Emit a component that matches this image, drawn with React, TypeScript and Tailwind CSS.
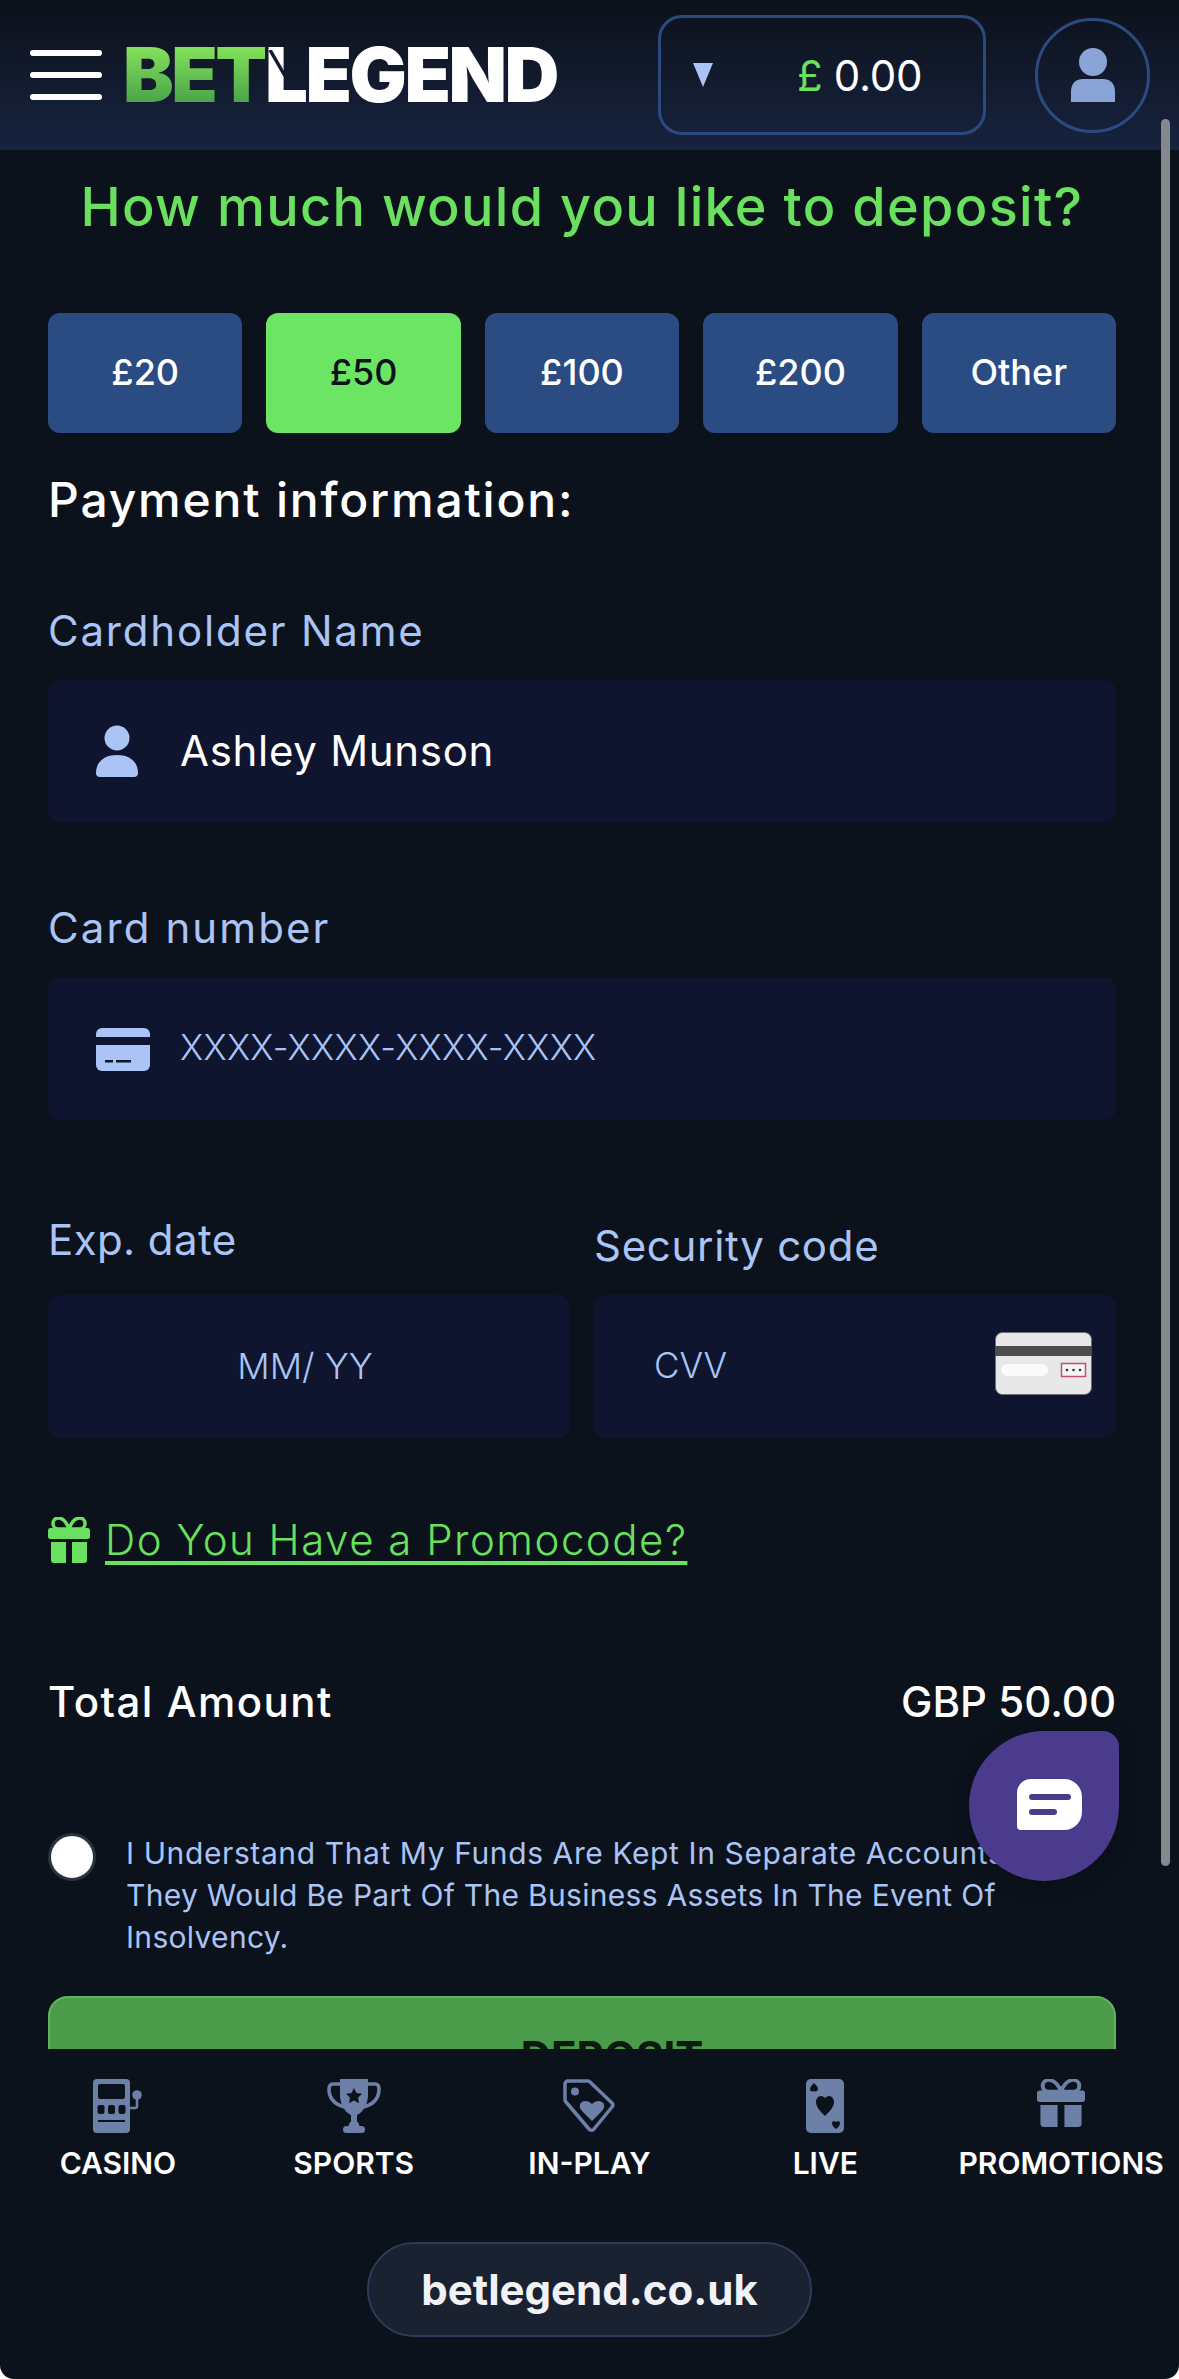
const amounts = ['£20', '£50', '£100', '£200', 'Other'];

function PersonIcon({ className }: { className?: string }) {
  return (
    <svg viewBox="0 0 42 52" className={className} fill="currentColor">
      <circle cx="21" cy="13" r="12.5" />
      <path d="M0 48c0-11 8-18 21-18s21 7 21 18c0 2.500-1.500 4-4 4H4c-2.500 0-4-1.500-4-4z" />
    </svg>
  );
}

function CardIcon({ className }: { className?: string }) {
  return (
    <svg viewBox="0 0 54 44" className={className} fill="currentColor">
      <path d="M0 7a6 6 0 0 1 6-6h42a6 6 0 0 1 6 6v3H0z" />
      <path d="M0 18h54v20a6 6 0 0 1-6 6H6a6 6 0 0 1-6-6z" />
      <rect x="9" y="33" width="8" height="2.500" fill="#0f152e" />
      <rect x="20" y="33" width="15" height="2.500" fill="#0f152e" />
    </svg>
  );
}

function GiftIcon({ className }: { className?: string }) {
  return (
    <svg viewBox="0 0 42 46" preserveAspectRatio="none" className={className} fill="currentColor">
      <path d="M21 12C18 4 14 1 10.500 1 7 1 5 3.500 5 6.500c0 3 2 5.500 5 5.500h11zm0 0c3-8 7-11 10.500-11C35 1 37 3.500 37 6.500c0 3-2 5.500-5 5.500H21z" fill="none" stroke="currentColor" strokeWidth="3.500" />
      <rect x="0" y="11" width="42" height="11" rx="2.500" />
      <path d="M3 25h15v21H6a3 3 0 0 1-3-3z" />
      <path d="M24 25h15v18a3 3 0 0 1-3 3H24z" />
    </svg>
  );
}

function SlotIcon() {
  return (
    <svg viewBox="0 0 50 54" className="h-[54px] w-[50px]">
      <rect x="0" y="0" width="37" height="54" rx="4" fill="#6c80a8" />
      <rect x="5" y="5" width="27" height="15" rx="2" fill="#0c121c" />
      <rect x="4.500" y="26" width="7" height="9" rx="2" fill="#0c121c" />
      <rect x="15" y="26" width="7" height="9" rx="2" fill="#0c121c" />
      <rect x="25.500" y="26" width="7" height="9" rx="2" fill="#0c121c" />
      <rect x="5" y="41" width="27" height="2" fill="#0c121c" />
      <circle cx="44" cy="16" r="4.800" fill="#6c80a8" />
      <path d="M44 19v8a2 2 0 0 1-2 2h-5" fill="none" stroke="#6c80a8" strokeWidth="2.500" />
    </svg>
  );
}

function TrophyIcon() {
  return (
    <svg viewBox="-3 0 54 54" className="h-[54px] w-[54px]">
      <path d="M11 5H3c-2.500 0-4 2-4 5 0 9 5 15 15 18M37 5h8c2.500 0 4 2 4 5 0 9-5 15-15 18" fill="none" stroke="#6c80a8" strokeWidth="3.600" />
      <path d="M10 0h28v16c0 10-6 18-11 20v7h-6v-7C16 34 10 26 10 16z" fill="#6c80a8" />
      <rect x="13" y="47" width="22" height="7" rx="3.500" fill="#6c80a8" />
      <path d="M20 43h8l2 5H18z" fill="#6c80a8" />
      <path d="M24 9l2.500 5 5.500.8-4 3.900 1 5.500-5-2.600-5 2.600 1-5.500-4-3.900 5.500-.8z" fill="#0c121c" />
    </svg>
  );
}

function TagIcon() {
  return (
    <svg viewBox="0 0 52 54" className="h-[54px] w-[52px]">
      <path d="M5 2h20a3 3 0 0 1 2 1l22 21a3 3 0 0 1 0 4L31 50a3 3 0 0 1-5 0L3 23a3 3 0 0 1-1-2V5a3 3 0 0 1 3-3z" fill="#0c121c" stroke="#6c80a8" strokeWidth="3.500" strokeLinejoin="round" />
      <circle cx="12" cy="12.500" r="4" fill="#6c80a8" />
      <path d="M29 42L19 32c-3-3-3-7 0-9 3-2 7-1 10 2 3-3 7-4 10-2 3 2 3 6 0 9z" fill="#6c80a8" />
    </svg>
  );
}

function LiveCardIcon() {
  return (
    <svg viewBox="0 0 38 54" className="h-[54px] w-[38px]">
      <rect x="0" y="0" width="38" height="54" rx="5" fill="#6c80a8" />
      <path d="M8 4c2 2 4 4 4 6 0 2-2 3-4 2-2 1-4 0-4-2 0-2 2-4 4-6z" fill="#0c121c" />
      <path d="M19 37c-5-5-9-9-9-14 0-3 2-6 5-6 2 0 3 1 4 2 1-1 2-2 4-2 3 0 5 3 5 6 0 5-4 9-9 14z" fill="#0c121c" />
      <path d="M30 50c-2-2-4-3-4-6 0-1 1-2 2-2l2 1 2-1c1 0 2 1 2 2 0 3-2 4-4 6z" fill="#0c121c" />
    </svg>
  );
}

function NavItem({ label, icon }: { label: string; icon: React.ReactNode }) {
  return (
    <div className="flex flex-col items-center">
      <div className="flex h-[54px] items-start">{icon}</div>
      <span className="mt-[12px] whitespace-nowrap text-[30px] leading-[36px] font-semibold text-white">{label}</span>
    </div>
  );
}

export default function App() {
  return (
    <div className="relative flex h-[2379px] w-[1179px] flex-col overflow-hidden rounded-b-[14px] bg-[#0c121c] font-['Inter',sans-serif]">
      <header className="flex h-[150px] shrink-0 items-center bg-gradient-to-b from-[#0c111b] to-[#17233f] pl-[30px] pr-[29px]">
        <div className="flex w-[72px] flex-col gap-[16px]">
          <div className="h-[6px] rounded-full bg-white" />
          <div className="h-[6px] rounded-full bg-white" />
          <div className="h-[6px] rounded-full bg-white" />
        </div>
        <div className="mb-[3px] ml-[21px] flex text-[76px] leading-none font-black tracking-[-2.5px]">
          <span className="bg-gradient-to-b from-[#90ee5e] to-[#3f9a46] bg-clip-text text-transparent">BET</span>
          <span className="relative text-white">
            LEGEND
            {/* cut across the top of the L */}
            <svg viewBox="0 0 20 34" className="absolute top-[14px] left-[3px] h-[34px] w-[20px]">
              <path d="M2 0l15 26" stroke="#111a2e" strokeWidth="3.500" />
            </svg>
          </span>
        </div>
        <div className="ml-auto flex h-[120px] w-[328px] items-center rounded-[24px] border-[3px] border-[#2c4a80] pl-[32px]">
          <svg viewBox="0 0 20 24" className="h-[24px] w-[20px] fill-[#a9c4f5]">
            <path d="M0 0h20L10 24z" />
          </svg>
          <span className="ml-[84px] text-[42px] tracking-[-0.3px] text-white">
            <span className="text-[#6ae05f]">£</span> 0.00
          </span>
        </div>
        <div className="ml-[49px] flex size-[115px] items-center justify-center rounded-full border-[3px] border-[#2c4a80]">
          <svg viewBox="0 0 44 54" className="h-[54px] w-[44px] fill-[#8aa4d8]">
            <circle cx="22" cy="14" r="14" />
            <path d="M0 54V44c0-9 5-13 12-13h20c7 0 12 4 12 13v10z" />
          </svg>
        </div>
      </header>

      <main className="relative flex-1 overflow-hidden px-[48px] pr-[63px]">
        <h1 className="mt-[19px] text-center text-[54px] leading-[76px] font-medium tracking-[1.3px] whitespace-nowrap text-[#6ae05f]">How much would you like to deposit?</h1>

        <div className="mt-[68px] grid grid-cols-5 gap-[24px]">
          {amounts.map((a) => (
            <button
              key={a}
              className={
                a === '£50'
                  ? 'h-[120px] rounded-[12px] bg-[#6de564] pb-[2px] text-[36px] font-medium text-[#0c121c]'
                  : 'h-[120px] rounded-[12px] bg-[#2b4c82] pb-[2px] text-[36px] font-medium text-white'
              }
            >
              {a}
            </button>
          ))}
        </div>

        <h2 className="mt-[31px] text-[48px] leading-[72px] font-medium tracking-[1.8px] text-white">Payment information:</h2>

        <div className="mt-[65px] text-[42px] leading-[60px] tracking-[1.8px] text-[#a9c4f5]">Cardholder Name</div>
        <div className="mt-[19px] flex h-[142px] items-center rounded-[12px] bg-[#0f152e] pl-[48px] text-[42px]">
          <PersonIcon className="h-[52px] w-[42px] text-[#a9c4f5]" />
          <span className="ml-[42px] mb-[2px] tracking-[0.7px] text-white">Ashley Munson</span>
        </div>

        <div className="mt-[76px] text-[42px] leading-[60px] tracking-[2.1px] text-[#a9c4f5]">Card number</div>
        <div className="mt-[19px] flex h-[143px] items-center rounded-[12px] bg-[#0f152e] pl-[48px] text-[35px] font-light tracking-[0.3px] text-[#a9c4f5]">
          <CardIcon className="h-[44px] w-[54px]" />
          <span className="ml-[30px] mb-[2px]">XXXX-XXXX-XXXX-XXXX</span>
        </div>

        <div className="mt-[90px] grid grid-cols-2 gap-[24px]">
          <div>
            <div className="mb-[25px] text-[42px] leading-[60px] tracking-[0.4px] text-[#a9c4f5]">Exp. date</div>
            <div className="mt-[19px] flex h-[143px] items-center justify-center rounded-[12px] bg-[#0f152e] pr-[8px] pb-[2px] text-[36px] font-light text-[#a9c4f5]">MM/ YY</div>
          </div>
          <div className="pt-[6px]">
            <div className="text-[42px] leading-[60px] tracking-[0.7px] text-[#a9c4f5]">Security code</div>
            <div className="relative mt-[19px] flex h-[143px] items-center rounded-[12px] bg-[#0f152e] pb-[2px] pl-[60px] text-[35px] font-light text-[#a9c4f5]">
              CVV
              <svg viewBox="0 0 97 63" className="absolute top-[37px] right-[24px] h-[63px] w-[97px]">
                <rect x="0.500" y="0.500" width="96" height="62" rx="7" fill="#e8e8e8" stroke="#6b6f7a" />
                <rect x="0" y="14" width="97" height="10" fill="#4d4d4d" />
                <rect x="6" y="32" width="47" height="12" rx="6" fill="#fafafa" />
                <rect x="66.500" y="31.500" width="24" height="13" fill="#f6f6f6" stroke="#c4506e" strokeWidth="1.500" />
                <circle cx="72" cy="38" r="1.300" fill="#333" />
                <circle cx="78.500" cy="38" r="1.300" fill="#333" />
                <circle cx="85" cy="38" r="1.300" fill="#333" />
              </svg>
            </div>
          </div>
        </div>

        <div className="mt-[72px] flex items-center text-[42px] leading-[60px] font-light tracking-[1.5px] text-[#6ae05f]">
          <GiftIcon className="h-[46px] w-[42px]" />
          <a className="ml-[15px] underline underline-offset-[6px]">Do You Have a Promocode?</a>
        </div>

        <div className="mt-[102px] flex justify-between text-[42px] leading-[60px] font-medium text-white">
          <span className="tracking-[1.5px]">Total Amount</span>
          <span>GBP 50.00</span>
        </div>

        <div className="mt-[100px] flex">
          <div className="mt-[1px] size-[48px] shrink-0 rounded-full border-[3px] border-[#2a3340] bg-white" />
          <p className="ml-[30px] text-[30px] leading-[42px] tracking-[0.3px] whitespace-nowrap text-[#a9c4f5]">
            <span className="tracking-[0.6px]">I Understand That My Funds Are Kept In Separate Accounts</span>
            <br />
            They Would Be Part Of The Business Assets In The Event Of
            <br />
            Insolvency.
          </p>
        </div>

        <button className="mt-[38px] h-[120px] w-full rounded-[20px] border-2 border-[#5fb55c] bg-[#4a9c4a] pl-[60px] text-[42px] font-bold text-[#0c1a10]">DEPOSIT</button>
      </main>

      <footer className="h-[330px] shrink-0 pt-[30px]">
        <div className="grid grid-cols-5">
          <NavItem label="CASINO" icon={<SlotIcon />} />
          <NavItem label="SPORTS" icon={<TrophyIcon />} />
          <NavItem label="IN-PLAY" icon={<TagIcon />} />
          <NavItem label="LIVE" icon={<LiveCardIcon />} />
          <NavItem label="PROMOTIONS" icon={<GiftIcon className="h-[48px] w-[48px] text-[#6c80a8]" />} />
        </div>
        <div className="mt-[61px] flex justify-center">
          <div className="flex h-[95px] w-[445px] items-center justify-center rounded-full border-2 border-[#2c3b58] bg-[#1a2130] text-[42px] font-bold text-[#f1f2f6]">betlegend.co.uk</div>
        </div>
      </footer>

      {/* scrollbar thumb */}
      <div className="absolute top-[119px] left-[1161px] h-[1747px] w-[9px] rounded-full bg-[#85888d]" />

      {/* chat launcher */}
      <div className="absolute top-[1731px] left-[969px] flex size-[150px] items-center justify-center rounded-tl-[75px] rounded-tr-[16px] rounded-br-[75px] rounded-bl-[75px] bg-[#4b3b8c] pb-[3px] pl-[11px] shadow-[0_4px_20px_rgba(0,0,0,0.25)]">
        <svg viewBox="0 0 65 51" className="h-[51px] w-[65px]">
          <path d="M14 0h33a18 18 0 0 1 18 18v15a18 18 0 0 1-18 18H4a4 4 0 0 1-4-4V14A14 14 0 0 1 14 0z" fill="#fff" />
          <rect x="12" y="15" width="42" height="6" rx="3" fill="#4b3b8c" />
          <rect x="12" y="30" width="28" height="6" rx="3" fill="#4b3b8c" />
        </svg>
      </div>
    </div>
  );
}
